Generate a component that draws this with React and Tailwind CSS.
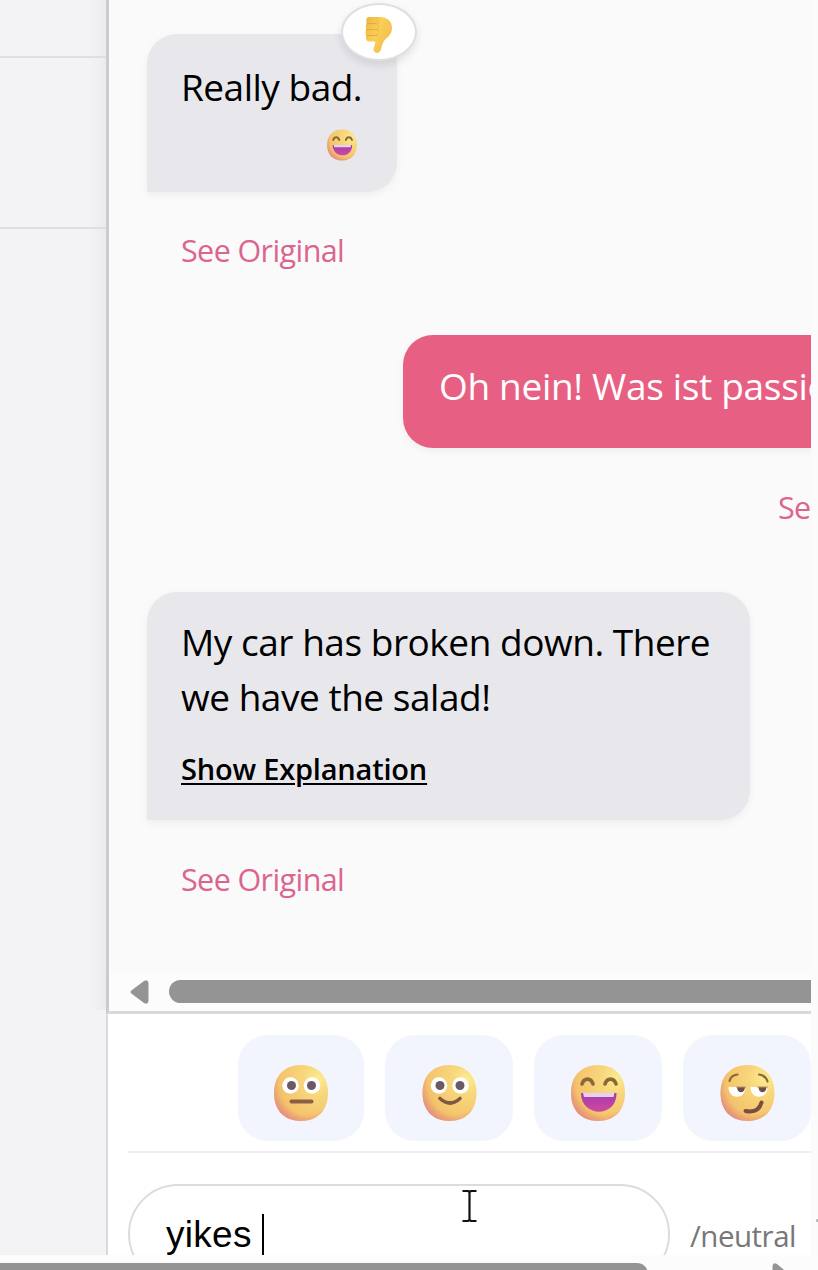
import React from "react";

function FaceBase({ id, children, className }) {
  const outline = "M28 1C45 1 55 12 55 29S45 57 28 57S1 46 1 29S11 1 28 1Z";
  return (
    <svg viewBox="0 0 56 58" className={className}>
      <defs>
        <radialGradient id={id + "-a"} cx="0.82" cy="0.25" r="0.95">
          <stop offset="0" stopColor="#fcec8e" />
          <stop offset="0.3" stopColor="#f8d67c" />
          <stop offset="0.75" stopColor="#f4c46c" />
          <stop offset="1" stopColor="#e9a468" />
        </radialGradient>
        <radialGradient id={id + "-b"} cx="0.6" cy="0.36" r="0.72">
          <stop offset="0.72" stopColor="#e58a80" stopOpacity="0" />
          <stop offset="1" stopColor="#e2848c" stopOpacity="0.85" />
        </radialGradient>
        <linearGradient id={id + "-m"} x1="0" y1="0" x2="0" y2="1">
          <stop offset="0" stopColor="#a43bb0" />
          <stop offset="1" stopColor="#cf4a9a" />
        </linearGradient>
      </defs>
      <path d={outline} fill={`url(#${id}-a)`} />
      <path d={outline} fill={`url(#${id}-b)`} />
      {children}
    </svg>
  );
}

function WideEyes() {
  return (
    <>
      <circle cx="17.5" cy="21.5" r="8.3" fill="#fff" />
      <circle cx="39" cy="21.5" r="8.3" fill="#fff" />
      <circle cx="18.5" cy="21.5" r="4.5" fill="#6b5a64" />
      <circle cx="38.5" cy="21.5" r="4.5" fill="#6b5a64" />
    </>
  );
}

function NeutralFace(props) {
  return (
    <FaceBase id="neutral" {...props}>
      <WideEyes />
      <path d="M18.5 37.5H38.5" stroke="#8a6044" strokeWidth="4" strokeLinecap="round" />
    </FaceBase>
  );
}

function SmileFace(props) {
  return (
    <FaceBase id="smile" {...props}>
      <WideEyes />
      <path d="M18.5 34.5Q28.5 43.5 38.5 34.5" stroke="#805840" strokeWidth="3.6" strokeLinecap="round" fill="none" />
    </FaceBase>
  );
}

function GrinFace({ id, className }) {
  return (
    <FaceBase id={id} className={className}>
      <path d="M12 20C14 13.5 21 13.5 23 20M35 20C37 13.5 44 13.5 46 20" stroke="#8a6838" strokeWidth="3.6" strokeLinecap="round" fill="none" />
      <path d="M11 29H46.5C47 54 11 54 11 29Z" fill={`url(#${id}-m)`} />
      <path d="M13 29H44.5L43.5 33H14Z" fill="#e6d2f0" />
    </FaceBase>
  );
}

function SmirkFace(props) {
  return (
    <FaceBase id="smirk" {...props}>
      <path d="M10 17C11 12.5 14 11 18 10.5M39.5 10.5C44 11 46.5 13 48 17.5" stroke="#8a6838" strokeWidth="2.2" strokeLinecap="round" fill="none" />
      <path d="M9 23H26C26 36 9 36 9 23ZM31 23H48C48 36 31 36 31 23Z" fill="#fff" />
      <path d="M17.5 23H25.5C25.5 30 17.5 30 17.5 23ZM39 23H47C47 30 39 30 39 23Z" fill="#6b5048" />
      <path d="M17 23H26M38 23H48" stroke="#b8935c" strokeWidth="1.2" strokeLinecap="round" />
      <path d="M26 47Q39 49.5 42 38.5" stroke="#7c4c40" strokeWidth="4" strokeLinecap="round" fill="none" />
    </FaceBase>
  );
}

function ThumbsDown({ className }) {
  return (
    <svg viewBox="0 0 28 38" className={className}>
      <defs>
        <linearGradient id="thumb" x1="0" y1="0" x2="1" y2="0.6">
          <stop offset="0" stopColor="#f0b43f" />
          <stop offset="0.5" stopColor="#f9cf57" />
          <stop offset="1" stopColor="#f2bd4d" />
        </linearGradient>
      </defs>
      <path d="M4 1H15C22 1 27 5 27 12C27 19 22 21 19 25C17 28 17 31 15.500 34.500C14 38.500 8.500 37 8.500 33.500C8.500 30 11 28 10 25.500H4C.5 25.500 .5 21 1.500 19.500C0 17.500 .5 14.500 1.500 13.500C.5 11.500 .7 8.500 2 7.500C.5 5 1 1 4 1Z" fill="url(#thumb)" />
      <path d="M2 7.5H11M1.5 13.5H12M1.5 19.5H12" stroke="#e6a843" strokeWidth="1" strokeLinecap="round" />
      <path d="M11.5 2.5C14 5 11.5 8 13.5 10C12 13 14 15 12.5 19" stroke="#ebb047" strokeWidth="0.8" fill="none" />
    </svg>
  );
}

function SeeOriginal({ className = "" }) {
  return (
    <div className={"whitespace-nowrap text-[30.5px] leading-[40px] tracking-[-0.6px] text-[#dc6590] " + className}>
      See Original
    </div>
  );
}

function Reaction({ children, className = "w-[128px]" }) {
  return (
    <button className={"flex h-[106px] shrink-0 items-center justify-center rounded-[30px] bg-[#f3f5fe] " + className}>
      {children}
    </button>
  );
}

const bubble =
  "relative rounded-[30px] text-[37px] leading-[55px] shadow-[0_3px_8px_rgba(0,0,0,0.05)]";

export default function App() {
  return (
    <div className="flex h-[1270px] w-[818px] flex-col overflow-hidden bg-[#fbfbfb] font-['Open_Sans',sans-serif] text-black">
      <div className="flex h-[1255px] shrink-0">
        <aside className="flex w-[106px] shrink-0 flex-col bg-[#f3f3f6]">
          <div className="h-[1010px] bg-linear-to-r from-transparent from-85% to-[#ebebee]">
            <div className="h-[58px] border-b-2 border-[#dfdfe2]" />
            <div className="h-[171px] border-b-2 border-[#dfdfe2]" />
          </div>
        </aside>

        <main className="flex w-[705px] shrink-0 flex-col overflow-hidden bg-white">
          <section className="flex h-[1014px] shrink-0 flex-col border-b-3 border-l-3 border-b-[#d9d9d9] border-l-[#cbcbcd] bg-[#fafafa]">
            <div className="flex h-[972px] shrink-0 flex-col items-start pl-[38px] pt-[34px]">
              <div className={bubble + " h-[158px] w-[250px] rounded-bl-[2px] bg-[#e8e8ec] pl-[34px] pr-[35px] pt-[25px] tracking-[-0.5px]"}>
                <p className="whitespace-nowrap">Really bad.</p>
                <div className="flex justify-end pr-[4px] pt-[15px]">
                  <GrinFace id="grin-small" className="h-[32px] w-[32px]" />
                </div>
                <span className="absolute -right-[20px] -top-[31px] flex h-[58px] w-[76px] items-center justify-center rounded-[50%] border-2 border-[#dfdfe1] bg-white shadow-[0_4px_8px_rgba(0,0,0,0.1)]">
                  <ThumbsDown className="mt-[5px] h-[38px] w-[28px]" />
                </span>
              </div>
              <SeeOriginal className="ml-[34px] mt-[38px]" />
              <div className={bubble + " ml-[256px] mt-[65px] h-[113px] w-[560px] whitespace-nowrap bg-[#e76083] pl-[36px] pt-[23px] tracking-[-0.32px] text-white"}>
                Oh nein! Was ist passiert?
              </div>
              <SeeOriginal className="ml-[631px] mt-[39px]" />
              <div className={bubble + " mt-[65px] h-[228px] w-[603px] rounded-bl-[2px] bg-[#e8e8ec] pl-[34px] pr-[30px] pt-[22px] tracking-[-0.47px]"}>
                <p className="whitespace-nowrap">
                  My car has broken down. There
                  <br />
                  we have the salad!
                </p>
                <button className="mt-[25px] block whitespace-nowrap text-[29px] font-semibold leading-[40px] tracking-[-0.2px] underline decoration-2 underline-offset-[3px]">
                  Show Explanation
                </button>
              </div>
              <SeeOriginal className="ml-[34px] mt-[39px]" />
            </div>
            <div className="flex h-[39px] shrink-0 items-center gap-[20px] bg-[#fcfcfc] pl-[21px]">
              <svg viewBox="0 0 19 26" className="h-[26px] w-[19px] shrink-0">
                <path d="M2 11L14 2Q18 0 18.500 4V22Q18 26 14 24L2 15Q-1 13 2 11Z" fill="#949494" />
              </svg>
              <div className="h-[23px] flex-1 rounded-l-full bg-[#949494]" />
            </div>
          </section>

          <section className="flex h-[241px] shrink-0 flex-col border-l-2 border-[#dadadc]">
            <div className="flex shrink-0 gap-[21px] pl-[130px] pt-[21px]">
              <Reaction className="w-[126px]">
                <NeutralFace className="mt-[9px] h-[58px] w-[56px]" />
              </Reaction>
              <Reaction>
                <SmileFace className="mt-[9px] h-[58px] w-[57px]" />
              </Reaction>
              <Reaction>
                <GrinFace id="grin" className="mt-[9px] h-[58px] w-[56px]" />
              </Reaction>
              <Reaction>
                <SmirkFace className="mt-[9px] h-[58px] w-[57px]" />
              </Reaction>
            </div>
            <div className="ml-[20px] mt-[10px] h-[2px] shrink-0 bg-[#eeeeee]" />
            <div className="flex shrink-0 items-start pl-[20px] pt-[31px]">
              <div className="relative flex h-[100px] w-[542px] items-center rounded-full border-2 border-[#dcdcdc] bg-white pl-[36px] pt-[2px] font-['Liberation_Sans',sans-serif] text-[37px] tracking-[0.3px]">
                <span className="whitespace-pre">yikes </span>
                <span className="h-[43px] w-[2px] bg-black" />
                <svg viewBox="0 0 15 34" className="absolute left-[332px] top-[3px] h-[34px] w-[15px]">
                  <path d="M0.5 2H6L7.5 3L9 2H14.5M7.5 2V32M0.5 32H6L7.5 31L9 32H14.5" stroke="#111" strokeWidth="2.2" fill="none" />
                </svg>
              </div>
              <span className="ml-[20px] mt-[32px] text-[29.5px] leading-[40px] tracking-[-0.5px] text-[#777777]">/neutral</span>
            </div>
          </section>
        </main>

        <div className="flex flex-1 items-end justify-end bg-[#fbfbfb] pb-[33px]">
          <span className="h-[3px] w-[2px] rounded-l-full bg-[#b0b0b0]" />
        </div>
      </div>

      <div className="flex h-[15px] shrink-0 items-start overflow-hidden bg-[#fcfcfc] pt-[8px]">
        <div className="h-[22px] w-[648px] shrink-0 rounded-r-full bg-[#949494]" />
        <svg viewBox="0 0 19 26" className="ml-[124px] h-[26px] w-[19px] shrink-0">
          <path d="M17 11L5 1Q1 -1 0.500 3V22Q1 26 5 24L17 15Q20 13 17 11Z" fill="#949494" />
        </svg>
      </div>
    </div>
  );
}
